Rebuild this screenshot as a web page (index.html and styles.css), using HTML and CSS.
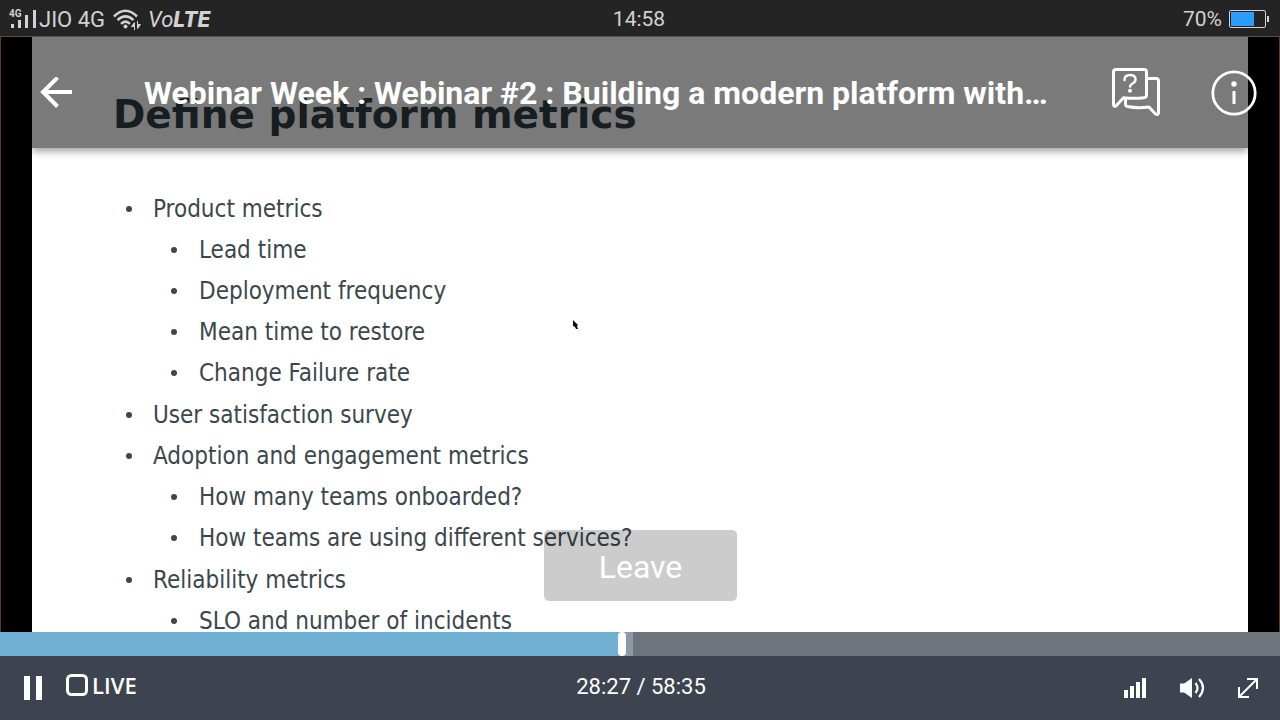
FILE: index.html
```html
<!DOCTYPE html>
<html lang="en">
<head>
<meta charset="utf-8">
<meta name="viewport" content="width=device-width, initial-scale=1">
<title>Webinar Week</title>
<link rel="stylesheet" href="styles.css">
</head>
<body>
<div class="status">
  <div class="status-side">
    <svg class="cell-icon" viewBox="0 0 28 22" width="28" height="22" fill="#d2d2d2" aria-hidden="true">
      <text class="cell-label" x="0" y="9">4G</text>
      <rect x="2" y="16" width="3" height="4"/><rect x="9" y="12" width="3" height="8"/><rect x="16" y="7" width="3" height="13"/><rect x="24" y="2" width="3" height="18"/>
    </svg>
    <span class="carrier">JIO 4G</span>
    <svg class="wifi-icon" viewBox="0 0 28 21" width="28" height="21" fill="none" stroke="#d2d2d2" stroke-width="2.500" aria-hidden="true">
      <path d="M1 7.500Q12.500-4 24 7.500M4.500 11.200Q12.500 3.600 20.500 11.200M8 14.800Q12.500 10.500 17 14.800"/>
      <circle cx="12.500" cy="17.500" r="2" fill="#d2d2d2" stroke="none"/>
      <path d="M21.500 21V13.500L18.500 17.500h3zM24.500 12v7.500l3-4h-3z" fill="#d2d2d2" stroke-width="1"/>
    </svg>
    <span class="volte"><i>Vo</i><b>LTE</b></span>
  </div>
  <time class="clock">14:58</time>
  <div class="status-side status-end">
    <span class="charge">70%</span>
    <svg viewBox="0 0 40 18" width="40" height="18" aria-hidden="true">
      <rect x="0.500" y="0.500" width="36" height="17" rx="1.500" fill="none" stroke="#d2d2d2"/>
      <rect x="2" y="2" width="23" height="14" fill="#2a9dfb"/>
      <rect x="38" y="6" width="2" height="6" fill="#d2d2d2"/>
    </svg>
  </div>
</div>

<main class="stage">
  <article class="slide">
    <h2 class="slide-title">Define platform metrics</h2>
    <ul class="points">
      <li>Product metrics
        <ul>
          <li>Lead time</li>
          <li>Deployment frequency</li>
          <li>Mean time to restore</li>
          <li>Change Failure rate</li>
        </ul>
      </li>
      <li>User satisfaction survey</li>
      <li>Adoption and engagement metrics
        <ul>
          <li>How many teams onboarded?</li>
          <li>How teams are using different services?</li>
        </ul>
      </li>
      <li>Reliability metrics
        <ul>
          <li>SLO and number of incidents</li>
        </ul>
      </li>
    </ul>
  </article>
  <svg class="pointer" viewBox="0 0 8 12" width="8" height="12" aria-hidden="true"><path d="M1 1L6 6 5 7 6 10 4 10 3 8 1 7z" fill="#111"/></svg>
  <div class="shade"></div>
  <header class="appbar">
    <button class="icon-btn" aria-label="Back">
      <svg viewBox="0 0 32 32" width="32" height="32" fill="none" stroke="#fff" stroke-width="4" aria-hidden="true"><path d="M32 15H3M17.500 0.500L3 15l14.500 14.500"/></svg>
    </button>
    <h1 class="title">Webinar Week : Webinar #2 : Building a modern platform with…</h1>
    <button class="icon-btn" aria-label="Questions">
      <svg viewBox="0 0 48 50" width="48" height="50" fill="none" stroke="#fff" stroke-width="3" stroke-linejoin="round" stroke-linecap="round" aria-hidden="true">
        <path d="M4 1.500H32Q34.500 1.500 34.500 4V27Q34.500 29.500 32 29.700Q22 31 11.500 29.700L4 38Q1.500 39 1.500 36V4Q1.500 1.500 4 1.500z"/>
        <path d="M36 10.500H44Q46.500 10.500 46.500 13V45Q46 47.500 43.500 46L37 39Q25 40.500 15.500 38.500Q13.500 38 13.500 36V31"/>
        <path d="M12.500 12Q12.500 7 18 7Q23.500 7 23.500 11.500Q23.500 14 20.500 15.500Q18 17 18 18.500" stroke-width="2.500"/>
        <circle cx="18" cy="22.800" r="2" fill="#fff" stroke="none"/>
      </svg>
    </button>
    <button class="icon-btn info" aria-label="Information">
      <svg viewBox="0 0 46 46" width="46" height="46" aria-hidden="true"><circle cx="23" cy="23" r="21.200" fill="none" stroke="#fff" stroke-width="2.800"/><circle cx="23" cy="14" r="2.700" fill="#fff"/><rect x="21.500" y="21" width="3" height="13" fill="#fff"/></svg>
    </button>
  </header>
  <button class="leave">Leave</button>
</main>

<div class="progress" role="progressbar" aria-label="Playback" aria-valuenow="1707" aria-valuemax="3515">
  <div class="played" style="width:48.6%"></div>
  <div class="buffered" style="width:0.85%"></div>
</div>
<footer class="controls">
  <div class="controls-side">
    <button class="icon-btn" aria-label="Pause"><svg viewBox="0 0 18 24" width="18" height="24" fill="#fff" aria-hidden="true"><path d="M0 0h6v24H0zM12 0h6v24h-6z"/></svg></button>
    <button class="live"><svg viewBox="0 0 22 22" width="22" height="22" aria-hidden="true"><rect x="1.500" y="1.500" width="19" height="19" rx="4" fill="none" stroke="#fff" stroke-width="3"/></svg>LIVE</button>
  </div>
  <span class="time">28:27 / 58:35</span>
  <div class="controls-side controls-end">
    <button class="icon-btn" aria-label="Quality"><svg viewBox="0 0 23 20" width="23" height="20" fill="#fff" aria-hidden="true"><path d="M0 12h4v8H0zM6 8h4v12H6zM12 4h4v16h-4zM18 0h4v20h-4z"/></svg></button>
    <button class="icon-btn" aria-label="Volume"><svg viewBox="0 0 25 20" width="25" height="20" aria-hidden="true"><path d="M0 5.500h4L12 0v20l-8-5.500H0z" fill="#fff"/><path d="M15.500 5Q19.500 10 15.500 15M19 1Q27 10 19 19" fill="none" stroke="#fff" stroke-width="2.200"/></svg></button>
    <button class="icon-btn" aria-label="Full screen"><svg viewBox="0 0 20 20" width="20" height="20" fill="none" stroke="#fff" stroke-width="2" aria-hidden="true"><path d="M1.500 18.500L18.500 1.500M9 1h10v10M1 9v10h10"/></svg></button>
  </div>
</footer>
</body>
</html>
```
FILE: styles.css
```css
* { box-sizing: border-box; }
body {
  margin: 0;
  height: 100vh;
  display: flex;
  flex-direction: column;
  overflow: hidden;
  background: #000;
  color: #fff;
  font-family: Roboto, sans-serif;
}
button { font: inherit; color: inherit; border: 0; background: none; padding: 0; }
svg { display: block; flex: none; }
h1, h2, ul { margin: 0; padding: 0; }

.status {
  display: grid;
  grid-template-columns: 1fr auto 1fr;
  align-items: center;
  height: 36px;
  padding: 2px 11px 0 9px;
  background: #242424;
  color: #d2d2d2;
  font-size: 22px;
}
.status-side { display: flex; align-items: center; }
.status-end { justify-content: flex-end; gap: 7px; }
.clock, .charge { font-size: 21px; }
.cell-label { font-size: 10px; font-weight: 700; }
.carrier { margin: 0 8px 0 2px; }
.volte { margin-left: 7px; }
.volte b { font-family: Inter, sans-serif; font-size: 21px; font-style: italic; font-weight: 800; }

.stage {
  position: relative;
  flex: 1;
  min-height: 0;
  overflow: hidden;
  border: solid #5f3c0c;
  border-width: 1px 1px 0;
  border-top-color: #5a5142;
  padding: 0 31px;
}
.slide {
  height: 100%;
  overflow: hidden;
  padding: 52px 81px 0;
  background: #fff;
  color: #3b474c;
  font-family: "DejaVu Sans Condensed", "DejaVu Sans", sans-serif;
}
.slide-title { color: #303f46; font-family: "DejaVu Sans", sans-serif; font-size: 39px; line-height: 52px; }
.points { margin-top: 48px; font-size: 24px; line-height: 41px; }
.points, .points ul { list-style: none; }
.points li { position: relative; padding-left: 40px; }
.points ul li { padding-left: 46px; }
.points ul { margin-bottom: 1px; }
.points li::before {
  content: "";
  position: absolute;
  top: 17px;
  left: 13px;
  width: 6px;
  height: 6px;
  border-radius: 50%;
  background: #3b474c;
}
.points ul li::before { left: 18px; }
.pointer { position: absolute; left: 571px; top: 282px; }
.shade {
  position: absolute;
  inset: 0 31px auto;
  height: 111px;
  background: rgba(0, 0, 0, 0.52);
  box-shadow: 0 3px 8px rgba(0, 0, 0, 0.4);
}
.appbar {
  position: absolute;
  inset: 0 0 auto;
  display: flex;
  align-items: center;
  height: 111px;
  padding: 0 22px 0 39px;
}
.title {
  flex: 1;
  min-width: 0;
  margin: 0 60px 0 72px;
  overflow: hidden;
  white-space: nowrap;
  text-overflow: ellipsis;
  font-size: 32px;
  font-weight: 700;
}
.info { margin-left: 51px; }
.leave {
  position: absolute;
  left: 50%;
  bottom: 31px;
  width: 193px;
  height: 71px;
  margin-left: -96px;
  padding-top: 3px;
  border-radius: 5px;
  background: rgba(0, 0, 0, 0.2);
  font-size: 32px;
}

.progress { display: flex; height: 24px; background: #6d747c; }
.played { position: relative; background: #70b0d2; }
.played::after {
  content: "";
  position: absolute;
  right: -4px;
  width: 8px;
  height: 24px;
  border-radius: 4px;
  background: #fff;
}
.buffered { background: #8c9aa6; }
.controls {
  display: grid;
  grid-template-columns: 1fr auto 1fr;
  align-items: center;
  height: 64px;
  padding: 0 22px 0 24px;
  background: #3d444f;
}
.controls-side { display: flex; align-items: center; gap: 24px; }
.controls-end { justify-content: flex-end; gap: 33px; }
.live {
  display: flex;
  align-items: center;
  gap: 4px;
  margin-bottom: 6px;
  font-family: "Open Sans", sans-serif;
  font-size: 22px;
  font-weight: 600;
  line-height: 24px;
}
.time { padding-bottom: 3px; font-size: 22px; }
```
